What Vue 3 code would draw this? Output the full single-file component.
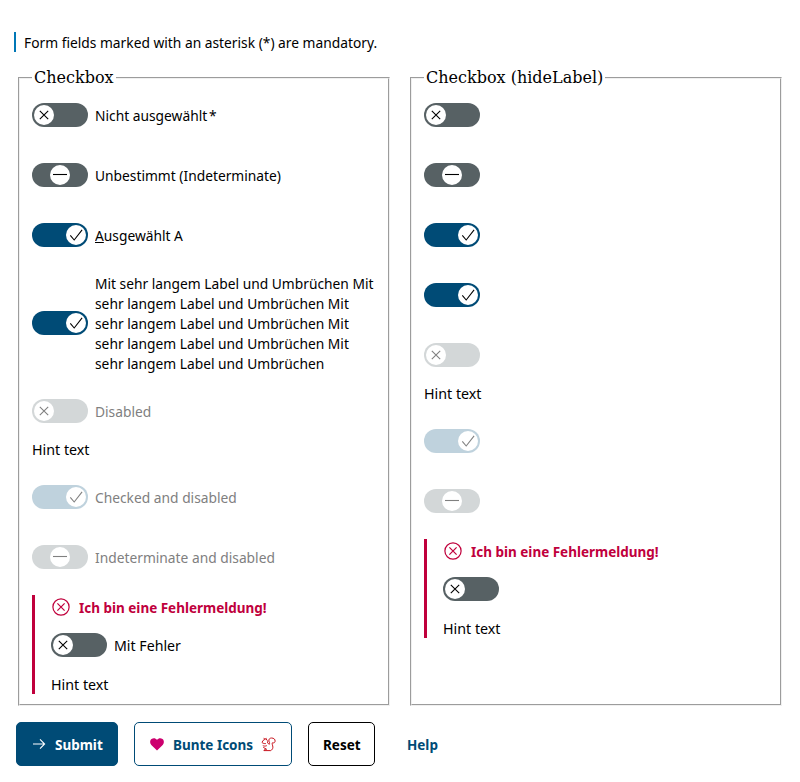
<script setup>
import { h } from 'vue'

const left = [
  { state: 'off', label: 'Nicht ausgewählt', required: true },
  { state: 'mixed', label: 'Unbestimmt (Indeterminate)' },
  { state: 'on', label: 'usgewählt A', accessKey: 'A' },
  {
    state: 'on',
    label: 'Mit sehr langem Label und Umbrüchen Mit sehr langem Label und Umbrüchen Mit sehr langem Label und Umbrüchen Mit sehr langem Label und Umbrüchen Mit sehr langem Label und Umbrüchen',
  },
  { state: 'off', label: 'Disabled', disabled: true, hint: 'Hint text' },
  { state: 'on', label: 'Checked and disabled', disabled: true },
  { state: 'mixed', label: 'Indeterminate and disabled', disabled: true },
  { state: 'off', label: 'Mit Fehler', error: 'Ich bin eine Fehlermeldung!', hint: 'Hint text' },
]

const groups = [
  { legend: 'Checkbox', fields: left },
  { legend: 'Checkbox (hideLabel)', fields: left.map((f) => ({ ...f, hideLabel: true })) },
]

const glyphs = {
  off: 'M5.8 5.8L14.2 14.2M14.2 5.8L5.8 14.2',
  mixed: 'M3 9.5H17',
  on: 'M4.3 10.4L8.2 15L16.1 4.9',
}

const Glyph = (props) =>
  h('svg', { viewBox: '0 0 20 20', width: 20, height: 20, fill: 'none', stroke: 'currentColor', 'stroke-width': 1.1 }, [
    h('path', { d: glyphs[props.name] }),
  ])
Glyph.props = ['name']
</script>

<template>
  <main class="page">
    <p class="note"><span class="t">Form fields marked with an asterisk (*) are mandatory.</span></p>
    <div class="groups">
      <fieldset v-for="g in groups" :key="g.legend">
        <legend>{{ g.legend }}</legend>
        <div class="fields">
          <div v-for="(f, i) in g.fields" :key="i" class="field" :class="{ invalid: f.error, disabled: f.disabled }">
            <div v-if="f.error" class="error">
              <svg width="18" height="18" viewBox="0 0 18 18" fill="none" stroke="currentColor" stroke-width="1.2">
                <circle cx="9" cy="9" r="8.1" />
                <path d="M5.4 5.4L12.6 12.6M12.6 5.4L5.4 12.6" />
              </svg>
              <span class="t bold">{{ f.error }}</span>
            </div>
            <div class="row">
              <span class="switch" :class="f.state"><span class="knob"><Glyph :name="f.state" /></span></span>
              <span v-if="!f.hideLabel" class="label t"><u v-if="f.accessKey">{{ f.accessKey }}</u>{{ f.label }}<span v-if="f.required" class="star">*</span></span>
            </div>
            <div v-if="f.hint" class="hint"><span class="t">{{ f.hint }}</span></div>
          </div>
        </div>
      </fieldset>
    </div>
    <div class="actions">
      <button class="primary">
        <svg class="arrow" width="14" height="14" viewBox="0 0 14 14" fill="none" stroke="currentColor" stroke-width="1.1">
          <path d="M1 7H12.6M8 2.4L12.6 7L8 11.6" />
        </svg>
        <span class="t bold">Submit</span>
      </button>
      <button class="secondary">
        <svg class="heart" width="14" height="13" viewBox="0 0 14 13" fill="#cc006e">
          <path d="M7 12.6L1.3 7C-0.4 5.2-0.2 2.3 1.5 1C3.3-.3 5.6 0 7 1.8C8.4 0 10.7-.3 12.5 1C14.2 2.3 14.4 5.2 12.7 7Z" />
        </svg>
        <span class="t bold">Bunte Icons</span>
        <svg class="squirrel" width="15" height="15" viewBox="0 0 15 15" fill="none" stroke="#c8141e" stroke-width="1" stroke-linejoin="round">
          <path d="M2.8 .9L3.8 2.4L5.2 1.4L5.7 3C6.8 3.6 7 4.8 6.4 5.8C7.2 6.1 7.8 6.6 8.2 7.4C9 6.2 8.4 5.2 7.9 4.1C7.5 2.2 8.8 1 10.6 1C12.8 1 14.3 2.4 14.1 4.2C14 5.6 12.9 6.2 11.4 5.8C10.6 7 11.9 8.4 11.9 10.2C11.9 11.8 10.9 12.9 9.8 13.6H2.9C3 12.6 4 12.3 5.6 12.3C4.6 11.5 3.4 11.2 2.3 10.4M1.8 8.6C3 9.3 4.4 9.2 5.8 8.7M4.8 6.6C3.4 6.6 2 6.6 1 5.4L2 3.5L3.8 2.4" />
        </svg>
      </button>
      <button class="normal"><span class="t bold">Reset</span></button>
      <button class="ghost"><span class="t bold">Help</span></button>
    </div>
  </main>
</template>

<style>
body {
  background: #fff;
}
</style>

<style scoped>
.page {
  padding: 32px 16px 16px;
  font-family: 'Noto Sans', sans-serif;
  font-size: 15px;
  line-height: 20px;
  color: #000;
}
.t {
  display: inline-block;
  transform: scaleX(0.919);
  transform-origin: 0 50%;
  white-space: nowrap;
}
.t.bold {
  transform: scaleX(0.899);
}
.note {
  margin: 0 0 16px -2px;
  border-left: 2px solid #0077b6;
  padding-left: 8px;
  height: 20px;
}
.groups {
  display: grid;
  grid-template-columns: 1fr 1fr;
  gap: 16px;
}
fieldset {
  margin: 0 2px;
  border: 2px groove rgb(240, 240, 240);
  padding: 6px 12px 10px;
  min-width: 0;
}
legend {
  padding: 0 2px;
  font-family: 'DejaVu Serif', serif;
  font-size: 16px;
  height: 19px;
  line-height: 19px;
}
.fields {
  display: flex;
  flex-direction: column;
  gap: 16px;
}
.row {
  display: flex;
  align-items: center;
  gap: 7px;
  min-height: 44px;
}
.row .label {
  flex: none;
  width: 308px;
  margin-right: -60px;
  white-space: normal;
}
.switch {
  flex: none;
  box-sizing: border-box;
  display: flex;
  width: 56px;
  height: 24px;
  padding: 2px;
  border-radius: 12px;
  background: #576164;
}
.switch.on {
  background: #004b76;
  justify-content: flex-end;
}
.switch.mixed {
  justify-content: center;
}
.knob {
  display: block;
  width: 20px;
  height: 20px;
  border-radius: 50%;
  background: #fff;
}
.knob svg {
  display: block;
}
.disabled .switch {
  background: #d3d7d8;
}
.disabled .switch.on {
  background: #bfd2dd;
}
.disabled .row {
  color: #808080;
}
.star {
  margin-left: 2px;
}
.hint {
  height: 20px;
  padding-top: 6px;
}
.hint .t {
  transform: scaleX(0.95);
}
.invalid .label {
  transform: scaleX(0.945);
}
.invalid .hint {
  padding-top: 7px;
}
.invalid {
  border-left: 3px solid #c0003c;
  padding-left: 16px;
}
.error {
  display: flex;
  align-items: center;
  gap: 9px;
  height: 28px;
  padding-left: 1px;
  box-sizing: border-box;
  padding-bottom: 4px;
  font-weight: 700;
  color: #c0003c;
}
.actions {
  display: flex;
  gap: 16px;
  margin-top: 16px;
}
button {
  display: flex;
  align-items: center;
  box-sizing: border-box;
  height: 44px;
  padding: 0 0 0 15px;
  border: 1px solid currentColor;
  border-radius: 5px;
  background: #fff;
  font: inherit;
  font-weight: 700;
  color: #004b76;
  gap: 9px;
}
button svg {
  flex: none;
}
.primary {
  width: 102px;
  background: #004b76;
  border-color: #004b76;
  color: #fff;
}
.secondary {
  width: 158px;
}
.secondary .t {
  width: 79px;
}
.normal {
  width: 67px;
  padding-left: 14px;
  color: #000;
}
.ghost {
  width: 63px;
  padding-left: 15px;
  border-color: transparent;
}
</style>
